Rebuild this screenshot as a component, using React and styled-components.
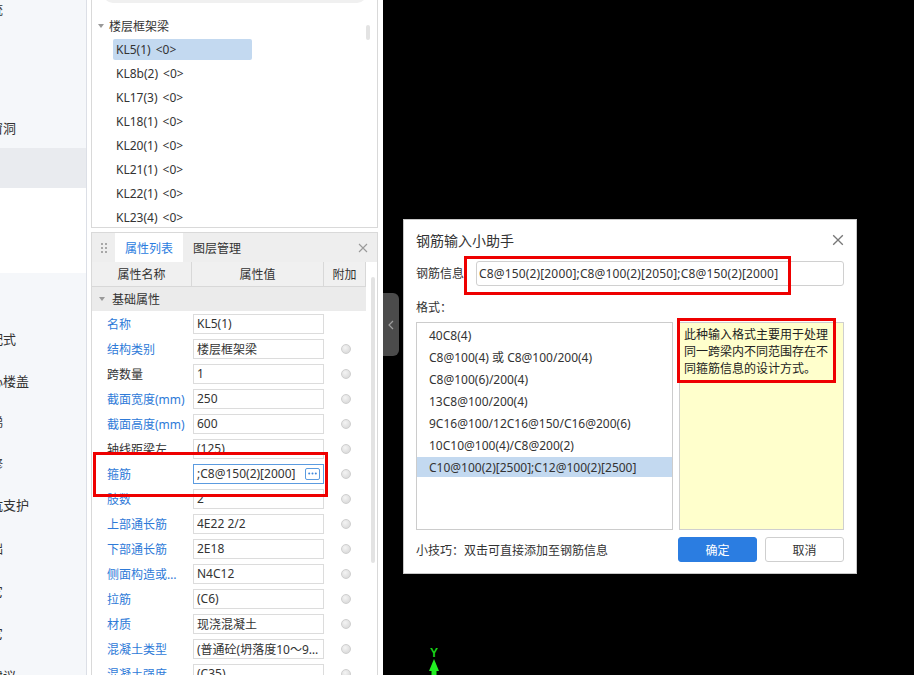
import styled, { createGlobalStyle } from "styled-components";

const GlobalStyle = createGlobalStyle`
  html, body {
    margin: 0;
    padding: 0;
    height: 100%;
    overflow: hidden;
    background: #000;
  }
  body {
    font-family: "Noto Sans", "Noto Sans CJK SC", sans-serif;
    font-size: 12px;
    color: #333;
  }
  * { box-sizing: border-box; }
`;

const Screen = styled.div`
  display: flex;
  width: 914px;
  height: 675px;
  overflow: hidden;
`;

/* ---------- left navigation (scrolled out of view) ---------- */
const Sidebar = styled.nav`
  width: 87px;
  flex-shrink: 0;
  background: #f5f7fa;
  border-right: 1px solid #dcdfe6;
  display: flex;
  flex-direction: column;
  overflow: hidden;
`;

const SideRow = styled.div`
  height: ${(p) => p.$h}px;
  flex-shrink: 0;
  display: flex;
  align-items: center;
  overflow: hidden;
  background: ${(p) =>
    p.$tone === "active" ? "#e9ebef" : p.$tone === "white" ? "#fff" : "transparent"};
`;

const SideLabel = styled.span`
  margin-left: -23px;
  font-size: 13px;
  white-space: nowrap;
  color: #333;
`;

/* ---------- middle column ---------- */
const MiddleColumn = styled.div`
  width: 296px;
  flex-shrink: 0;
  background: #fff;
  padding: 0 5px 0 4px;
  display: flex;
  flex-direction: column;
`;

const TreePanel = styled.section`
  position: relative;
  height: 228px;
  flex-shrink: 0;
  border: 1px solid #d9d9d9;
  border-top: none;
  overflow: hidden;
`;

const SearchStub = styled.div`
  height: 20px;
  margin: -17px 10px 0 11px;
  border-radius: 10px;
  background: #f0f0f0;
`;

const TreeHeader = styled.div`
  height: 20px;
  margin-top: 13px;
  padding-left: 6px;
  display: flex;
  align-items: center;
  gap: 5px;
  color: #333;
`;

const Caret = styled.span`
  width: 0;
  height: 0;
  border-left: 3.5px solid transparent;
  border-right: 3.5px solid transparent;
  border-top: 4px solid #999;
`;

const TreeList = styled.div`
  margin-top: 1px;
  display: flex;
  flex-direction: column;
`;

const TreeRow = styled.div`
  height: 24px;
  flex-shrink: 0;
  padding-left: 21px;
  display: flex;
  align-items: center;
`;

const TreeChip = styled.div`
  width: 139px;
  height: 21px;
  padding-left: 3px;
  display: flex;
  align-items: center;
  border-radius: 2px;
  background: ${(p) => (p.$selected ? "#c3d9f0" : "transparent")};
  color: #333;
`;

const Count = styled.span`
  margin-left: 5px;
`;

const ScrollThumb = styled.div`
  position: absolute;
  right: ${(p) => p.$right}px;
  top: ${(p) => p.$top}px;
  width: 4px;
  height: ${(p) => p.$h}px;
  border-radius: 2px;
  background: #e3e3e3;
`;

const PropsPanel = styled.section`
  position: relative;
  flex: 1;
  margin-top: 4px;
  border: 1px solid #d9d9d9;
  border-bottom: none;
  overflow: hidden;
  display: flex;
  flex-direction: column;
`;

const TabBar = styled.div`
  height: 29px;
  flex-shrink: 0;
  background: #eeeeee;
  display: flex;
  align-items: stretch;
`;

const Grip = styled.div`
  width: 23px;
  display: flex;
  align-items: center;
  justify-content: center;
`;

const Tab = styled.div`
  padding: 0 10px;
  display: flex;
  align-items: center;
  background: ${(p) => (p.$active ? "#fff" : "transparent")};
  color: ${(p) => (p.$active ? "#2a7ce0" : "#333")};
`;

const TabClose = styled.div`
  margin-left: auto;
  margin-right: 9px;
  display: flex;
  align-items: center;
`;

const Grid = styled.div`
  width: 274px;
  flex-shrink: 0;
  display: grid;
  grid-template-columns: 100px 132px 42px;
`;

const HeadRow = styled(Grid)`
  height: 25px;
  background: #f0f0f0;
  border-bottom: 1px solid #d8d8d8;
`;

const HeadCell = styled.div`
  display: flex;
  align-items: center;
  justify-content: center;
  border-right: 1px solid #d8d8d8;
  color: #333;
`;

const GroupRow = styled.div`
  width: 274px;
  height: 24px;
  flex-shrink: 0;
  padding-left: 7px;
  display: flex;
  align-items: center;
  gap: 7px;
  background: #ebebeb;
  color: #333;
`;

const PropRow = styled(Grid)`
  height: 25px;
  align-items: center;
`;

const PropName = styled.div`
  padding: 0 7px 0 15px;
  white-space: nowrap;
  overflow: hidden;
  text-overflow: ellipsis;
  color: ${(p) => (p.$link ? "#2e7ad8" : "#333")};
`;

const ValueBox = styled.div`
  width: 131px;
  height: 20px;
  margin-left: 1px;
  padding: 0 3px;
  display: flex;
  align-items: center;
  gap: 4px;
  border: 1px solid ${(p) => (p.$focused ? "#5b9be0" : "#dcdcdc")};
  background: #fff;
  color: #333;
`;

const ValueText = styled.span`
  flex: 1;
  min-width: 0;
  white-space: nowrap;
  overflow: hidden;
  text-overflow: ellipsis;
`;

const MoreButton = styled.span`
  width: 15px;
  height: 12px;
  flex-shrink: 0;
  border: 1px solid #5b9be0;
  border-radius: 2px;
  display: flex;
  align-items: center;
  justify-content: center;
`;

const RadioCell = styled.div`
  display: flex;
  justify-content: center;
`;

const Radio = styled.span`
  width: 10px;
  height: 10px;
  margin-left: 1px;
  border-radius: 50%;
  border: 1px solid #cfcfcf;
  background: radial-gradient(circle at 40% 35%, #f4f4f4, #d4d4d4);
`;

const Mark = styled.div`
  position: absolute;
  left: ${(p) => p.$x}px;
  top: ${(p) => p.$y}px;
  width: ${(p) => p.$w}px;
  height: ${(p) => p.$h}px;
  border: 3px solid #ee0000;
  pointer-events: none;
`;

/* ---------- drawing canvas ---------- */
const Canvas = styled.div`
  position: relative;
  flex: 1;
  background: #000;
`;

const CollapseTab = styled.div`
  position: absolute;
  left: 0;
  top: 293px;
  width: 16px;
  height: 63px;
  background: #4b4b4b;
  border-radius: 0 6px 6px 0;
  display: flex;
  align-items: center;
  justify-content: center;
`;

const AxisMark = styled.svg`
  position: absolute;
  left: 42px;
  top: 645px;
`;

const Dialog = styled.div`
  position: absolute;
  left: 20px;
  top: 219px;
  width: 454px;
  height: 355px;
  background: #fff;
  border: 1px solid #c8c8c8;
  padding: 0 12px 11px;
  display: flex;
  flex-direction: column;
`;

const DialogHeader = styled.div`
  height: 40px;
  flex-shrink: 0;
  display: flex;
  align-items: center;
  justify-content: space-between;
`;

const DialogTitle = styled.div`
  font-size: 14px;
  color: #333;
`;

const FieldRow = styled.div`
  height: 26px;
  flex-shrink: 0;
  display: flex;
  align-items: center;
  gap: 12px;
`;

const FieldInput = styled.div`
  flex: 1;
  height: 25px;
  padding: 0 2px;
  display: flex;
  align-items: center;
  border: 1px solid #d0d0d0;
  border-radius: 3px;
  color: #333;
  white-space: nowrap;
  letter-spacing: 0.15px;
`;

const SectionLabel = styled.div`
  margin-top: 14px;
  line-height: 16px;
`;

const FormatArea = styled.div`
  margin-top: 6px;
  height: 208px;
  flex-shrink: 0;
  display: grid;
  grid-template-columns: 257px 1fr;
  gap: 6px;
`;

const FormatList = styled.div`
  border: 1px solid #cccccc;
  padding-top: 2px;
  display: flex;
  flex-direction: column;
  gap: 2px;
`;

const FormatItem = styled.div`
  height: 20px;
  flex-shrink: 0;
  padding-left: 12px;
  display: flex;
  align-items: center;
  white-space: nowrap;
  color: #333;
  background: ${(p) => (p.$selected ? "#c3d9f0" : "transparent")};
`;

const NoteBox = styled.div`
  border: 1px solid #cfcfcf;
  background: #ffffcc;
  padding: 3px 4px;
  line-height: 17px;
  color: #222;
`;

const Footer = styled.div`
  margin-top: 7px;
  display: flex;
  align-items: center;
  gap: 8px;
`;

const Tip = styled.div`
  flex: 1;
  color: #333;
`;

const Button = styled.div`
  width: 79px;
  height: 25px;
  border-radius: 3px;
  display: flex;
  align-items: center;
  justify-content: center;
  background: ${(p) => (p.$primary ? "#2b7de1" : "#fff")};
  color: ${(p) => (p.$primary ? "#fff" : "#333")};
  border: 1px solid ${(p) => (p.$primary ? "#2b7de1" : "#cfcfcf")};
`;

const sideItems = [
  { h: 16, label: "系统" },
  { h: 45, label: "柱" },
  { h: 45, label: "墙" },
  { h: 42, label: "门窗洞" },
  { h: 40, label: "梁", tone: "active" },
  { h: 85, label: "", tone: "white" },
  { h: 44, label: "板" },
  { h: 42, label: "装配式" },
  { h: 42, label: "空心楼盖" },
  { h: 40, label: "楼梯" },
  { h: 42, label: "装修" },
  { h: 43, label: "基坑支护" },
  { h: 43, label: "基础" },
  { h: 42, label: "其它" },
  { h: 43, label: "其它" },
  { h: 42, label: "提建议" },
];

const beams = ["KL5(1)", "KL8b(2)", "KL17(3)", "KL18(1)", "KL20(1)", "KL21(1)", "KL22(1)", "KL23(4)"];

const props = [
  { name: "名称", value: "KL5(1)", link: true, radio: false },
  { name: "结构类别", value: "楼层框架梁", link: true },
  { name: "跨数量", value: "1" },
  { name: "截面宽度(mm)", value: "250", link: true },
  { name: "截面高度(mm)", value: "600", link: true },
  { name: "轴线距梁左轮廓线(mm)", value: "(125)" },
  { name: "箍筋", value: ";C8@150(2)[2000]", link: true, focused: true },
  { name: "肢数", value: "2", link: true },
  { name: "上部通长筋", value: "4E22 2/2", link: true },
  { name: "下部通长筋", value: "2E18", link: true },
  { name: "侧面构造或受扭筋(总配筋值)", value: "N4C12", link: true },
  { name: "拉筋", value: "(C6)", link: true },
  { name: "材质", value: "现浇混凝土", link: true },
  { name: "混凝土类型", value: "(普通砼(坍落度10～90mm，碎石40mm))", link: true },
  { name: "混凝土强度等级", value: "(C35)", link: true },
];

const formats = [
  "40C8(4)",
  "C8@100(4) 或 C8@100/200(4)",
  "C8@100(6)/200(4)",
  "13C8@100/200(4)",
  "9C16@100/12C16@150/C16@200(6)",
  "10C10@100(4)/C8@200(2)",
  "C10@100(2)[2500];C12@100(2)[2500]",
];

function GripIcon() {
  return (
    <svg width="8" height="12" viewBox="0 0 8 12">
      {[0, 4, 8].map((y) =>
        [0, 4].map((x) => <rect key={`${x}-${y}`} x={x + 1} y={y + 1} width="2" height="2" fill="#a8a8a8" />)
      )}
    </svg>
  );
}

function CloseIcon({ size, color }) {
  return (
    <svg width={size} height={size} viewBox="0 0 10 10">
      <path d="M1 1L9 9M9 1L1 9" stroke={color} strokeWidth="1.1" fill="none" />
    </svg>
  );
}

function App() {
  return (
    <>
      <GlobalStyle />
      <Screen>
        <Sidebar>
          {sideItems.map((it, i) => (
            <SideRow key={i} $h={it.h} $tone={it.tone}>
              <SideLabel>{it.label}</SideLabel>
            </SideRow>
          ))}
        </Sidebar>

        <MiddleColumn>
          <TreePanel>
            <SearchStub />
            <TreeHeader>
              <Caret />
              <span>楼层框架梁</span>
            </TreeHeader>
            <TreeList>
              {beams.map((b, i) => (
                <TreeRow key={b}>
                  <TreeChip $selected={i === 0}>
                    {b}
                    <Count>&lt;0&gt;</Count>
                  </TreeChip>
                </TreeRow>
              ))}
            </TreeList>
            <ScrollThumb $right={7} $top={25} $h={15} />
          </TreePanel>

          <PropsPanel>
            <TabBar>
              <Grip>
                <GripIcon />
              </Grip>
              <Tab $active>属性列表</Tab>
              <Tab>图层管理</Tab>
              <TabClose>
                <CloseIcon size={10} color="#9a9a9a" />
              </TabClose>
            </TabBar>
            <HeadRow>
              <HeadCell>属性名称</HeadCell>
              <HeadCell>属性值</HeadCell>
              <HeadCell>附加</HeadCell>
            </HeadRow>
            <GroupRow>
              <Caret />
              <span>基础属性</span>
            </GroupRow>
            {props.map((p) => (
              <PropRow key={p.name}>
                <PropName $link={p.link}>{p.name}</PropName>
                <ValueBox $focused={p.focused}>
                  <ValueText>{p.value}</ValueText>
                  {p.focused && (
                    <MoreButton>
                      <svg width="9" height="3" viewBox="0 0 9 3">
                        <circle cx="1.2" cy="1.5" r="1" fill="#3d86dc" />
                        <circle cx="4.5" cy="1.5" r="1" fill="#3d86dc" />
                        <circle cx="7.8" cy="1.5" r="1" fill="#3d86dc" />
                      </svg>
                    </MoreButton>
                  )}
                </ValueBox>
                <RadioCell>{p.radio !== false && <Radio />}</RadioCell>
              </PropRow>
            ))}
            <ScrollThumb $right={2} $top={44} $h={286} />
            <Mark $x={1} $y={219} $w={235} $h={45} />
          </PropsPanel>
        </MiddleColumn>

        <Canvas>
          <CollapseTab>
            <svg width="6" height="10" viewBox="0 0 6 10">
              <path d="M5 1L1 5L5 9" stroke="#a0a0a0" strokeWidth="1.2" fill="none" />
            </svg>
          </CollapseTab>

          <Dialog>
            <DialogHeader>
              <DialogTitle>钢筋输入小助手</DialogTitle>
              <CloseIcon size={12} color="#777" />
            </DialogHeader>
            <FieldRow>
              <span>钢筋信息</span>
              <FieldInput>C8@150(2)[2000];C8@100(2)[2050];C8@150(2)[2000]</FieldInput>
            </FieldRow>
            <SectionLabel>格式：</SectionLabel>
            <FormatArea>
              <FormatList>
                {formats.map((f, i) => (
                  <FormatItem key={f} $selected={i === formats.length - 1}>
                    {f}
                  </FormatItem>
                ))}
              </FormatList>
              <NoteBox>此种输入格式主要用于处理同一跨梁内不同范围存在不同箍筋信息的设计方式。</NoteBox>
            </FormatArea>
            <Footer>
              <Tip>小技巧：双击可直接添加至钢筋信息</Tip>
              <Button $primary>确定</Button>
              <Button>取消</Button>
            </Footer>
            <Mark $x={60} $y={36} $w={327} $h={39} />
            <Mark $x={273} $y={98} $w={159} $h={65} />
          </Dialog>

          <AxisMark width="18" height="30" viewBox="0 0 18 30">
            <text x="9" y="12" textAnchor="middle" fontSize="12" fontWeight="bold" fill="#19d419" fontFamily="Liberation Sans, sans-serif">
              Y
            </text>
            <polygon points="9,14 14,26 4,26" fill="#22ee22" />
            <rect x="6.5" y="25" width="5" height="5" fill="#22ee22" />
          </AxisMark>
        </Canvas>
      </Screen>
    </>
  );
}

export default App;
